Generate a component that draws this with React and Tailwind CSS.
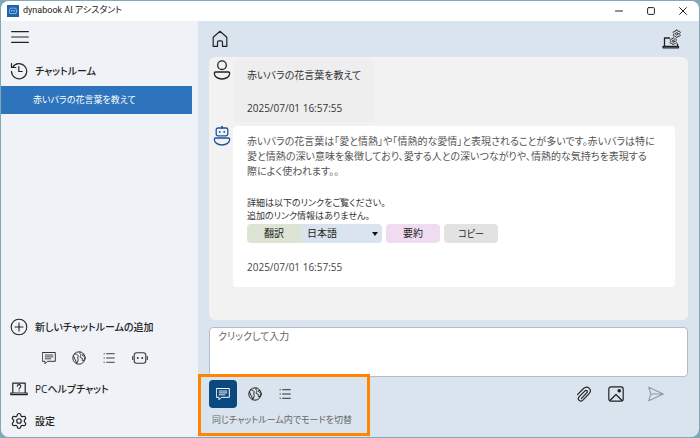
import React, { useState } from 'react'
import { Settings } from 'lucide-react'

const languages = ['日本語', '英語', '中国語']

const Svg = ({ className, children, box = '0 0 24 24', stroke = 1.5 }) => (
    <svg viewBox={box} className={className} fill="none" stroke="currentColor" strokeWidth={stroke} strokeLinecap="round" strokeLinejoin="round" aria-hidden="true">
        {children}
    </svg>
)

const ChatIcon = ({ className }) => (
    <Svg className={className} box="0 0 14 14" stroke={1}>
        <path d="M.7 1.500h12.600v8.800H5.500L3 12.800v-2.500H.7z" />
        <path d="M3.200 4h7.600M3.200 5.900h7.600M3.200 7.800h5.600" strokeWidth="0.9" />
    </Svg>
)

const GlobeIcon = ({ className }) => (
    <Svg className={className} box="0 0 14 14" stroke={1}>
        <circle cx="7" cy="7" r="6.200" />
        <path d="M2.400 3c1.600-.4 3 .3 3.600 1.500.4 1-.4 1.600-.2 2.600.2 1.200.6 1.600.1 2.900-.2.8-.6 1.600-1.300 2.400C4 11 4.100 9.800 3.300 8.800 2.600 7.900 1.800 6.500 1.600 4.600" />
        <path d="M8.300 1c-.9 1-.5 1.700.3 2.300.8.5.1 1.200-.3 2-.4 1.100.4 1.900 1.500 1.800.8 0 .7 1 .5 1.900-.1.900.4 1.200 1.200.7.7-.6.9-1.900 1.500-2.700M11.800 3.300c-1-.1-1.600.5-1.300 1.300.4.7 1.300.6 2.100.4" />
    </Svg>
)

const ListIcon = ({ className }) => (
    <Svg className={className} box="0 0 14 14" stroke={1.1}>
        <path d="M4.200 2h9M4.200 7h9M4.200 12h9" />
        <path d="M1.200 2h.4M1.200 7h.4M1.200 12h.4" />
    </Svg>
)

const FaceIcon = ({ className }) => (
    <Svg className={className} box="0 0 16 14" stroke={1.1}>
        <rect x="2.200" y="1.800" width="11.600" height="10.400" rx="2.500" />
        <path d="M.7 5.500v3M15.300 5.500v3" />
        <path d="M5.700 7h.1M10.200 7h.1" strokeWidth="1.900" />
    </Svg>
)

const HistoryIcon = ({ className }) => (
    <Svg className={className} box="0 0 18 18" stroke={1.2}>
        <path d="M2.600 5.200a7.600 7.600 0 1 1-1.100 4.200" />
        <path d="M1.500 1.500v4h4.300M8.800 4.500v5h3.400" />
    </Svg>
)

const HelpIcon = ({ className }) => (
    <Svg className={className} box="0 0 18 14" stroke={1.2}>
        <path d="M2.800 10.500V1.200h12.400v9.300" />
        <path d="M.8 11h16.400v1.600H.8z" />
        <path d="M7.300 4.300c0-2.200 3.500-2.200 3.500 0 0 1.300-1.700 1.300-1.700 2.700M9.100 8.800v.1" strokeWidth="1.100" />
    </Svg>
)

const DeviceIcon = ({ className }) => (
    <Svg className={className} box="0 0 20 20" stroke={1}>
        <path d="M2.500 17V9h5M15.500 16.500V15" strokeWidth="1.300" />
        <path d="M1 17.300h15.500v1.500H1z" strokeWidth="1.200" />
        <Settings x="10" y="0" width="9.500" height="9.500" strokeWidth={2.200} />
        <Settings x="7" y="8" width="8.500" height="8.500" strokeWidth={2.400} />
    </Svg>
)

const UserIcon = ({ className }) => (
    <Svg className={className} box="0 0 18 20" stroke={1.3}>
        <circle cx="9" cy="5.200" r="4.300" />
        <path d="M2.500 12h13c.7 0 1.200.6 1.200 1.300 0 3.300-3.300 5.700-7.700 5.700s-7.700-2.400-7.700-5.700c0-.7.500-1.300 1.200-1.300z" />
    </Svg>
)

const BotIcon = ({ className }) => (
    <Svg className={className} box="0 0 18 20" stroke={1.3}>
        <rect x="3.200" y="2" width="11.600" height="7.800" rx="1.800" />
        <path d="M9 .7V2M6.700 5.900h.1M11.200 5.900h.1" strokeWidth="1.800" />
        <path d="M2.500 12h13c.7 0 1.200.6 1.200 1.300 0 3.300-3.300 5.700-7.700 5.700s-7.700-2.400-7.700-5.700c0-.7.500-1.300 1.200-1.300z" />
    </Svg>
)

const SideItem = ({ icon, label }) => (
    <button type="button" className="flex h-7 items-center gap-1.5 pl-2 text-left font-medium">
        <span className="flex w-5 justify-center">{icon}</span>
        {label}
    </button>
)

const App = () => {

    const [text, setText] = useState('')

    return (
        <div className="flex min-h-screen flex-col bg-[#7fa9b4] p-px font-['Open_Sans','Noto_Sans_CJK_JP',sans-serif] text-[10px] text-[#222] [font-feature-settings:'palt']">
            <div className="flex flex-1 flex-col overflow-hidden rounded-lg bg-[#dae4ee]">
                {/* Titelleiste */}
                <header className="flex h-5 items-center bg-white pl-1.5">
                    <svg viewBox="0 0 12 12" className="size-3" aria-hidden="true">
                        <rect width="12" height="12" fill="#1f62ae" />
                        <path d="M3 8.800 2.300 6.500 3.200 3.200h5.600L9.800 6 9 8.500H4.800z" fill="none" stroke="#9fc6ef" strokeWidth=".8" />
                        <path d="M4.800 5v1.500M7.200 5v1.500" stroke="#fff" strokeWidth=".8" />
                    </svg>
                    <h1 className="ml-1 flex-1 font-[Roboto,'Noto_Sans_CJK_JP',sans-serif] text-[9px]">dynabook AI アシスタント</h1>
                    <div className="flex">
                        <button type="button" aria-label="最小化" className="flex w-8 justify-center">
                            <Svg className="size-2" box="0 0 8 8" stroke={1}><path d="M.5 4h7" /></Svg>
                        </button>
                        <button type="button" aria-label="最大化" className="flex w-8 justify-center">
                            <Svg className="size-2" box="0 0 8 8" stroke={1}><rect x=".6" y=".6" width="6.800" height="6.800" rx="1" /></Svg>
                        </button>
                        <button type="button" aria-label="閉じる" className="flex w-8 justify-center">
                            <Svg className="size-2" box="0 0 8 8" stroke={1}><path d="m.6.6 6.800 6.800M7.400.6.6 7.400" /></Svg>
                        </button>
                    </div>
                </header>

                <div className="flex flex-1">
                    {/* Seitenleiste */}
                    <nav className="flex w-[197px] shrink-0 flex-col bg-[#eff2f7] pb-0.5">
                        <button type="button" aria-label="メニュー" className="ml-2.5 flex h-8 w-5 items-center">
                            <Svg className="h-3 w-[18px]" box="0 0 18 12" stroke={1.1}><path d="M.6.6h16.800M.6 6h16.800M.6 11.400h16.800" /></Svg>
                        </button>
                        <div className="mt-1 mb-px flex flex-col">
                            <SideItem icon={<HistoryIcon className="size-[18px]" />} label="チャットルーム" />
                        </div>
                        <a href="#room" className="mr-1.5 flex h-7 items-center bg-[#2e74bc] pl-8 text-[9px] text-white">赤いバラの花言葉を教えて</a>

                        <div className="mt-auto flex flex-col">
                            <SideItem
                                icon={<Svg className="size-[18px]" box="0 0 18 18" stroke={1.1}><circle cx="9" cy="9" r="7.800" /><path d="M9 5v8M5 9h8" /></Svg>}
                                label="新しいチャットルームの追加"
                            />
                            <div className="flex h-[34px] items-center gap-4 pl-[41px] text-[#333]">
                                <button type="button" aria-label="チャット"><ChatIcon className="size-3.5" /></button>
                                <button type="button" aria-label="翻訳モード"><GlobeIcon className="size-3.5" /></button>
                                <button type="button" aria-label="要約モード"><ListIcon className="h-3 w-3.5" /></button>
                                <button type="button" aria-label="ヘルプモード"><FaceIcon className="h-3.5 w-4" /></button>
                            </div>
                            <SideItem icon={<HelpIcon className="h-3.5 w-[18px]" />} label="PCヘルプチャット" />
                            <div className="mt-1 flex flex-col">
                                <SideItem icon={<Settings className="size-[18px]" strokeWidth={1.6} />} label="設定" />
                            </div>
                        </div>
                    </nav>

                    {/* Hauptbereich */}
                    <main className="flex min-w-0 flex-1 flex-col px-[11px]">
                        <div className="flex h-9 items-center justify-between pr-1.5 pl-0.5">
                            <button type="button" aria-label="ホーム">
                                <Svg className="size-[18px]" box="0 0 18 18" stroke={1.2}>
                                    <path d="M2.200 7.200 9 1.300l6.800 5.900v9.200h-4.300v-4.200c0-.9-.6-1.400-1.400-1.400H7.900c-.8 0-1.400.5-1.400 1.400v4.200H2.200z" />
                                </Svg>
                            </button>
                            <button type="button" aria-label="デバイス設定"><DeviceIcon className="size-5" /></button>
                        </div>

                        <section className="flex flex-1 flex-col gap-1 rounded-md bg-[#f2f2f2] pt-[3px] pr-[13px] pl-1">
                            <article className="flex items-start gap-0.5">
                                <UserIcon className="h-5 w-[18px] shrink-0" />
                                <div className="rounded-sm bg-[#eeeeee] px-3.5 pt-2 pb-1.5 leading-[15px] text-[#333]">
                                    <p>赤いバラの花言葉を教えて</p>
                                    <time className="mt-[18px] block">2025/07/01 16:57:55</time>
                                </div>
                            </article>
                            <article className="flex items-start gap-0.5">
                                <BotIcon className="h-5 w-[18px] shrink-0 text-[#1b56a0]" />
                                <div className="flex-1 rounded-sm bg-white px-3.5 pt-2 pb-3 text-[#555]">
                                    <p className="leading-[15px]">
                                        赤いバラの花言葉は「愛と情熱」や「情熱的な愛情」と表現されることが多いです。赤いバラは特に<br />
                                        愛と情熱の深い意味を象徴しており、愛する人との深いつながりや、情熱的な気持ちを表現する<br />
                                        際によく使われます。。
                                    </p>
                                    <p className="mt-[17px] text-[9px] leading-[13px] text-[#333]">
                                        詳細は以下のリンクをご覧ください。<br />
                                        追加のリンク情報はありません。
                                    </p>
                                    <div className="mt-0.5 flex h-[19px] gap-1 text-[#222]">
                                        <div className="flex overflow-hidden rounded-sm">
                                            <button type="button" className="w-[54px] bg-[#dce4d4]">翻訳</button>
                                            <div className="relative flex">
                                                <select aria-label="言語" className="w-[81px] appearance-none bg-[#dae4ee] pl-1.5">
                                                    {languages.map((l) => (
                                                        <option key={l}>{l}</option>
                                                    ))}
                                                </select>
                                                <svg viewBox="0 0 6 4" className="pointer-events-none absolute top-2 right-1 h-1 w-1.5" aria-hidden="true">
                                                    <path d="M0 0h6L3 4z" fill="#111" />
                                                </svg>
                                            </div>
                                        </div>
                                        <button type="button" className="w-[54px] rounded-sm bg-[#efdcf0]">要約</button>
                                        <button type="button" className="w-[54px] rounded-sm bg-[#e2e2e2] text-[9px]">コピー</button>
                                    </div>
                                    <time className="mt-[17px] block leading-[15px] text-[#444]">2025/07/01 16:57:55</time>
                                </div>
                            </article>
                        </section>

                        <textarea
                            aria-label="メッセージ"
                            placeholder="クリックして入力"
                            value={text}
                            onChange={(e) => setText(e.target.value)}
                            className="mt-[7px] h-[50px] resize-none rounded-sm border border-[#b3bcc8] bg-white px-2 py-px leading-[15px] placeholder:text-[#666]"
                        />

                        <div className="mt-[3px] flex items-start justify-between pb-[9px]">
                            <div className="relative">
                                <div className="flex items-center gap-1.5">
                                    <button type="button" aria-label="チャット" className="flex size-7 items-center justify-center rounded-sm bg-[#0b4880] text-white"><ChatIcon className="size-3.5" /></button>
                                    <button type="button" aria-label="翻訳" className="flex w-6 justify-center"><GlobeIcon className="size-3.5" /></button>
                                    <button type="button" aria-label="要約" className="flex w-6 justify-center"><ListIcon className="h-3 w-3.5" /></button>
                                </div>
                                <p className="mt-1 pl-[3px] text-[9px] leading-4 text-[#666]">同じチャットルーム内でモードを切替</p>
                                <div className="pointer-events-none absolute -top-1.5 -bottom-2 -left-[11px] w-[172px] border-3 border-[#ff8400]" />
                            </div>
                            <div className="flex h-7 items-center pr-6">
                                <button type="button" aria-label="ファイル添付" className="flex w-8 justify-center">
                                    <Svg className="size-4" box="0 0 16 16" stroke={1.2}>
                                        <path d="m1.500 8.600 6-6.100c3.800-3.600 9.200 1 5.600 5.100l-6.200 6.500c-2.600 2.400-6-.6-3.900-3.300L9 4.800c1.400-1.200 3.100.3 2 1.900l-5.700 5.900" />
                                    </Svg>
                                </button>
                                <button type="button" aria-label="画像" className="flex w-8 justify-center">
                                    <Svg className="size-4" box="0 0 16 16" stroke={1.2}>
                                        <rect x=".8" y=".8" width="14.400" height="14.400" rx="2.200" />
                                        <path d="m2 14.500 6-6 6 6" />
                                        <circle cx="11.200" cy="4.700" r="1.200" fill="currentColor" />
                                    </Svg>
                                </button>
                                <button type="button" aria-label="送信" className="ml-4 text-[#8d99a6]">
                                    <Svg className="size-4" box="0 0 16 16" stroke={1.1}>
                                        <path d="M.8 1.300 15.300 8 .8 14.700 2.800 8zM2.800 8h12" />
                                    </Svg>
                                </button>
                            </div>
                        </div>
                    </main>
                </div>
            </div>
        </div>
    )
}

export default App
